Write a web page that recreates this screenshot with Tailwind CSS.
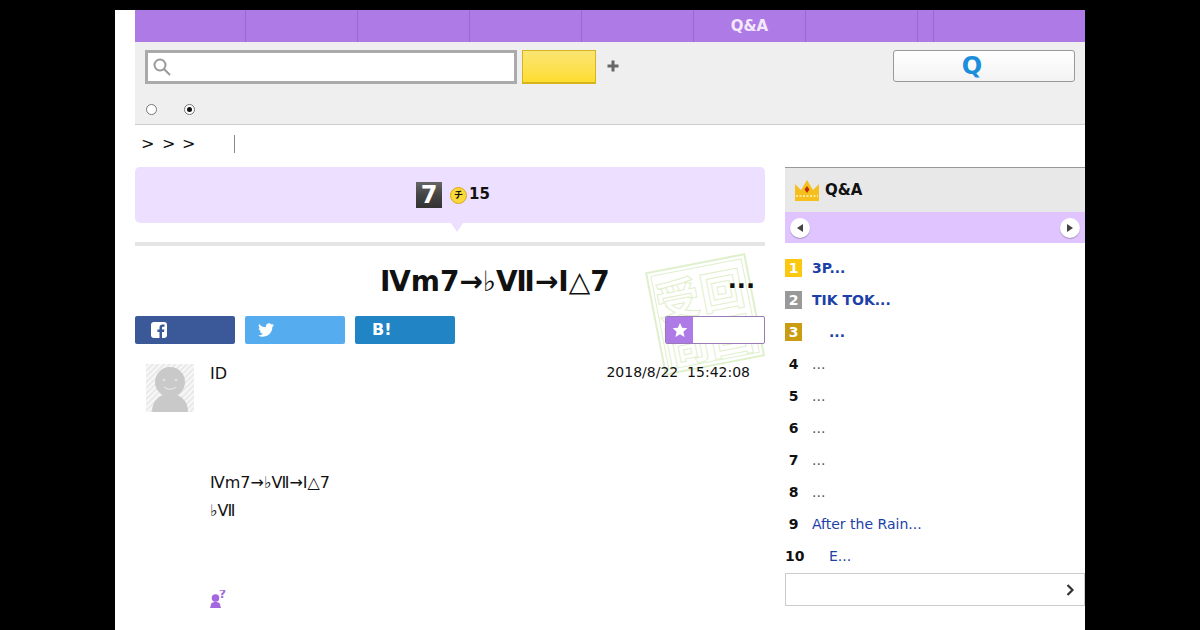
<!DOCTYPE html>
<html lang="ja">
<head>
  <meta charset="UTF-8" />
  <title>Q&amp;A</title>
  <script src="https://cdn.jsdelivr.net/npm/@tailwindcss/browser@4"></script>
</head>
<body class="bg-black h-[630px] overflow-hidden font-['DejaVu_Sans','Noto_Sans_CJK_JP',sans-serif] text-[#111]">
  <div class="w-[970px] h-[620px] mx-auto mt-[10px] bg-white pl-[20px] overflow-hidden">

    <!-- Nav -->
    <div class="flex h-[32px] bg-[#ae7ae6] text-white font-bold text-[15px]">
      <div class="w-[111px] border-r border-[#9a68d2]"></div>
      <div class="w-[112px] border-r border-[#9a68d2]"></div>
      <div class="w-[112px] border-r border-[#9a68d2]"></div>
      <div class="w-[112px] border-r border-[#9a68d2]"></div>
      <div class="w-[112px] border-r border-[#9a68d2]"></div>
      <div class="w-[112px] border-r border-[#9a68d2] flex items-center justify-center text-[#f3e9fb]">Q&amp;A</div>
      <div class="w-[112px] border-r border-[#9a68d2]"></div>
      <div class="w-[16px] border-r border-[#9a68d2]"></div>
      <div class="flex-1"></div>
    </div>

    <!-- Search -->
    <div class="h-[83px] bg-[#efefef] border-b border-[#ccc] pt-[8px] pl-[10px] pr-[10px]">
      <div class="flex items-start">
        <div class="w-[372px] h-[34px] border-[3px] border-[#aaa] bg-white flex items-center pl-[5px]">
          <svg width="18" height="18" viewBox="0 0 18 18" fill="none" stroke="#999" stroke-width="2"><circle cx="7" cy="7" r="5.5"/><path d="M11 11l6 6"/></svg>
        </div>
        <div class="w-[74px] h-[34px] ml-[5px] border border-[#d4b520] border-b-2 bg-gradient-to-b from-[#fbe571] to-[#fedd2c]"></div>
        <svg class="ml-[11px] mt-[10px]" width="12" height="12" viewBox="0 0 12 12" fill="#666"><path d="M4.500 0.500h3v4h4v3h-4v4h-3v-4h-4v-3h4z"/></svg>
        <div class="ml-auto w-[182px] h-[32px] border border-[#999] rounded-[3px] bg-gradient-to-b from-white to-[#f3f3f3] flex items-center justify-center pr-[24px] text-[#1b8fdc] font-bold text-[24px]">Q</div>
      </div>
      <div class="flex h-[11px] mt-[20px] pl-[1px] gap-[27px]">
        <span class="w-[11px] h-[11px] rounded-full border border-[#777] bg-white"></span>
        <span class="w-[11px] h-[11px] rounded-full border border-[#777] bg-white flex items-center justify-center"><span class="w-[5px] h-[5px] rounded-full bg-[#111]"></span></span>
      </div>
    </div>

    <!-- Breadcrumb -->
    <div class="flex items-center h-[42px] pl-[6px] pb-[4px] text-[16px]">
      <span class="w-[21px]">&gt;</span><span class="w-[20px]">&gt;</span><span class="w-[52px]">&gt;</span>
      <span class="w-px h-[18px] bg-[#888]"></span>
    </div>

    <div class="flex">
      <!-- Main column -->
      <div class="w-[630px] relative">
        <div class="relative h-[56px] bg-[#eddfff] rounded-[5px] flex items-center pl-[281px]">
          <div class="w-[26px] h-[26px] bg-gradient-to-b from-[#666] via-[#444] to-[#333] text-white font-bold text-[24px] leading-[26px] text-center">7</div>
          <div class="ml-[8px] w-[17px] h-[17px] rounded-full bg-[#fbd93a] border border-[#d8a91c] text-[9px] leading-[15px] text-center font-bold">チ</div>
          <span class="ml-[2px] mb-[2px] font-bold text-[15px]">15</span>
          <div class="absolute left-[316px] top-[56px] w-0 h-0 border-x-[6px] border-x-transparent border-t-[9px] border-t-[#eddfff]"></div>
        </div>
        <div class="h-[4px] bg-[#e5e5e5] mt-[19px]"></div>

        <!-- Stamp -->
        <svg class="absolute left-[507px] top-[86px]" width="125" height="122" viewBox="0 0 125 122">
          <g transform="rotate(-11 62 61)" fill="none" stroke="#dff0cd" stroke-width="2">
            <rect x="13" y="10" width="100" height="103"/>
            <rect x="17" y="14" width="92" height="95" stroke-width="1"/>
            <text x="17" y="58" font-size="44" font-weight="bold" font-family="Noto Sans CJK JP" stroke-width="1">受</text>
            <text x="62" y="58" font-size="44" font-weight="bold" font-family="Noto Sans CJK JP" stroke-width="1">回</text>
            <text x="17" y="104" font-size="44" font-weight="bold" font-family="Noto Sans CJK JP" stroke-width="1">問</text>
            <text x="62" y="104" font-size="44" font-weight="bold" font-family="Noto Sans CJK JP" stroke-width="1">回</text>
          </g>
        </svg>

        <!-- Title -->
        <div class="relative flex justify-between items-center h-[70px] pl-[245px] pr-[10px] pt-[2px] font-bold text-[28px]">
          <span>Ⅳm7→♭Ⅶ→Ⅰ△7</span>
          <span class="text-[24px] mb-[4px]">...</span>
        </div>

        <!-- Share -->
        <div class="relative flex gap-[10px] h-[28px]">
          <div class="w-[100px] rounded-[2px] bg-[#3b5998] flex items-center pl-[16px]">
            <svg width="16" height="16" viewBox="0 0 16 16"><rect width="16" height="16" rx="3" fill="#fff"/><path d="M11 16v-6h2l.4-2.500H11V6c0-.8.3-1.200 1.200-1.200h1.300V2.600C13 2.500 12.300 2.400 11.600 2.400 9.700 2.400 8.500 3.500 8.500 5.700v1.800H6.400V10h2.100v6z" fill="#3b5998"/></svg>
          </div>
          <div class="w-[100px] rounded-[2px] bg-[#55acee] flex items-center pl-[13px]">
            <svg width="16" height="14" viewBox="0 0 24 20" fill="#fff"><path d="M24 2.400c-.9.400-1.800.7-2.800.8 1-.6 1.800-1.600 2.200-2.700-1 .6-2 1-3.100 1.200C19.300.7 18 0 16.600 0c-2.700 0-4.900 2.200-4.900 4.900 0 .4 0 .8.100 1.100C7.700 5.800 4.100 3.900 1.700.9 1.200 1.600 1 2.500 1 3.400c0 1.700.9 3.200 2.200 4.100-.8 0-1.600-.2-2.200-.6v.1c0 2.400 1.700 4.400 3.900 4.800-.7.200-1.500.2-2.200.1.600 2 2.400 3.400 4.600 3.400C5.600 17.500 3 18.400.1 18.100 2.300 19.400 4.900 20 7.500 20c9.100 0 14-7.500 14-14v-.6c1-.7 1.800-1.600 2.500-3z"/></svg>
          </div>
          <div class="w-[100px] rounded-[2px] bg-[#2185c5] flex items-center pl-[17px] text-white font-bold text-[16px]">B!</div>
          <div class="ml-auto w-[100px] rounded-[2px] border border-[#9a7ab8] flex overflow-hidden bg-white">
            <div class="w-[27px] bg-[#ae7ae6] flex items-center justify-center">
              <svg width="16" height="16" viewBox="0 0 24 24" fill="#fff"><path d="M12 1.500l3.200 7.200 7.800.8-5.900 5.200 1.700 7.700-6.800-4-6.800 4 1.700-7.700L1 9.500l7.800-.8z"/></svg>
            </div>
          </div>
        </div>

        <!-- Post -->
        <div class="relative flex mt-[20px] pl-[11px]">
          <svg class="shrink-0" width="48" height="48" viewBox="0 0 48 48">
            <defs><pattern id="stripes" width="4" height="4" patternUnits="userSpaceOnUse" patternTransform="rotate(-45)"><rect width="4" height="4" fill="#f8f8f8"/><rect width="4" height="2" fill="#e9e9e9"/></pattern></defs>
            <rect width="48" height="48" fill="url(#stripes)"/>
            <circle cx="24" cy="18" r="15" fill="#c9c9c9"/>
            <path d="M6 48c0-11 7-18 18-18s18 7 18 18z" fill="#c9c9c9"/>
            <circle cx="18" cy="16" r="1.300" fill="#e2e2e2"/><circle cx="30" cy="16" r="1.300" fill="#e2e2e2"/>
            <path d="M18 23c3 3 9 3 12 0" fill="none" stroke="#e2e2e2" stroke-width="1.500"/>
          </svg>
          <div class="ml-[16px] flex-1 text-[16px]">
            <div class="flex justify-between items-start pr-[15px] h-[105px]">
              <span class="leading-[20px]">ID</span>
              <span class="text-[14px] leading-[16px] whitespace-pre">2018/8/22  15:42:08</span>
            </div>
            <p class="leading-[28px]">Ⅳm7→♭Ⅶ→Ⅰ△7</p>
            <p class="leading-[28px]">♭Ⅶ</p>
            <svg class="mt-[65px]" width="20" height="20" viewBox="0 0 20 20" fill="#a368e0">
              <circle cx="5.500" cy="8" r="3.800"/><path d="M0 18l1.500-5 4-1.500 4 1.500 1.500 5z"/>
              <text x="9" y="8" font-size="12" font-weight="bold">?</text>
            </svg>
          </div>
        </div>
      </div>

      <!-- Sidebar -->
      <div class="w-[300px] ml-[20px]">
        <div class="h-[45px] bg-[#e8e8e8] border-t border-[#999] flex items-center pl-[9px] font-bold text-[15px]">
          <svg width="26" height="24" viewBox="0 0 26 24">
            <path d="M1 6l6 6 6-10 6 10 6-6v17H1z" fill="#f5bf1d"/>
            <path d="M13 8l2.500 3.500L13 15l-2.500-3.500z" fill="#c22a12"/>
            <path d="M2 18h22" stroke="#fff5c0" stroke-width="1.500" stroke-dasharray="2 1.500"/>
          </svg>
          <span class="ml-[5px]">Q&amp;A</span>
        </div>
        <div class="h-[31px] bg-[#e0c4ff] flex items-center justify-between px-[5px]">
          <div class="w-[20px] h-[20px] rounded-full bg-white shadow-[0_1px_1px_#0004] flex items-center justify-center">
            <svg width="6" height="8" viewBox="0 0 6 8" fill="#444"><path d="M6 0v8L0 4z"/></svg>
          </div>
          <div class="w-[20px] h-[20px] rounded-full bg-white shadow-[0_1px_1px_#0004] flex items-center justify-center">
            <svg width="6" height="8" viewBox="0 0 6 8" fill="#444"><path d="M0 0v8l6-4z"/></svg>
          </div>
        </div>

        <ol class="mt-[9px] text-[14px] text-[#1c3fa8]">
          <li class="flex items-center h-[32px] font-bold"><span class="w-[17px] h-[18px] bg-[#fbc70f] text-white text-center leading-[18px]">1</span><span class="ml-[10px]">3P...</span></li>
          <li class="flex items-center h-[32px] font-bold"><span class="w-[17px] h-[18px] bg-[#999] text-white text-center leading-[18px]">2</span><span class="ml-[10px]">TIK TOK...</span></li>
          <li class="flex items-center h-[32px] font-bold"><span class="w-[17px] h-[18px] bg-[#c99c12] text-white text-center leading-[18px]">3</span><span class="ml-[27px]">...</span></li>
          <li class="flex items-center h-[32px]"><span class="w-[17px] font-bold text-[#111] text-center">4</span><span class="ml-[10px] text-[#555]">...</span></li>
          <li class="flex items-center h-[32px]"><span class="w-[17px] font-bold text-[#111] text-center">5</span><span class="ml-[10px] text-[#555]">...</span></li>
          <li class="flex items-center h-[32px]"><span class="w-[17px] font-bold text-[#111] text-center">6</span><span class="ml-[10px] text-[#555]">...</span></li>
          <li class="flex items-center h-[32px]"><span class="w-[17px] font-bold text-[#111] text-center">7</span><span class="ml-[10px] text-[#555]">...</span></li>
          <li class="flex items-center h-[32px]"><span class="w-[17px] font-bold text-[#111] text-center">8</span><span class="ml-[10px] text-[#555]">...</span></li>
          <li class="flex items-center h-[32px]"><span class="w-[17px] font-bold text-[#111] text-center">9</span><span class="ml-[10px]">After the Rain...</span></li>
          <li class="flex items-center h-[32px]"><span class="w-[17px] font-bold text-[#111] text-center whitespace-nowrap">10</span><span class="ml-[27px]">E...</span></li>
        </ol>
        <div class="h-[33px] mt-px border border-[#ccc] flex items-center justify-end pr-[9px]">
          <svg width="9" height="12" viewBox="0 0 9 12" fill="none" stroke="#333" stroke-width="2.200"><path d="M1.500 1l5 5-5 5"/></svg>
        </div>
      </div>
    </div>
  </div>
</body>
</html>
